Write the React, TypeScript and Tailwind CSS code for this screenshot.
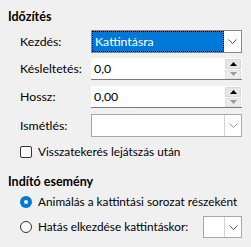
function Chevron({ color = '#5a5a5a' }: { color?: string }) {
  return (
    <svg width="9" height="5" viewBox="0 0 9 5" fill="none">
      <path d="M0.5 0.5 L4.5 4.5 L8.5 0.5" stroke={color} strokeWidth="1" />
    </svg>
  )
}

function Spin() {
  return (
    <div className="flex h-[20px] w-[16px] flex-col gap-px self-center">
      <div className="flex h-[10px] items-center justify-center border border-[#d9d9d9] bg-[#e6e6e6]">
        <svg width="7" height="4" viewBox="0 0 7 4">
          <path d="M0 4 L3.5 0 L7 4 Z" fill="#000" />
        </svg>
      </div>
      <div className="flex h-[9px] items-center justify-center border border-[#e0e0e0] bg-[#ececec]">
        <svg width="7" height="4" viewBox="0 0 7 4">
          <path d="M0 0 L3.5 4 L7 0 Z" fill="#9a9a9a" />
        </svg>
      </div>
    </div>
  )
}

function SpinField({ value }: { value: string }) {
  return (
    <div className="flex h-[22px] items-center border-b border-[#7a7a7a] bg-white pl-[3px] pr-px">
      <span className="flex-1">{value}</span>
      <Spin />
    </div>
  )
}

function Combo({ className = '', light = false }: { className?: string; light?: boolean }) {
  return (
    <div className={`flex border border-[#a8a8a8] bg-white ${className}`}>
      <div className="flex-1" />
      <div className="flex w-[17px] items-center justify-center border-l border-[#d4d4d4]">
        <Chevron color={light ? '#9a9a9a' : '#5a5a5a'} />
      </div>
    </div>
  )
}

export default function App() {
  return (
    <div className="h-[247px] w-[251px] whitespace-nowrap bg-[#f0f0f0] pl-2 pt-[9px] font-['Lato',sans-serif] text-[11.8px] leading-[16px] text-black">
      <div className="text-[12.5px] font-bold">Időzítés</div>

      <div className="mt-[5px] grid grid-cols-[71px_151px] pl-3 text-[12.3px]">
        <div className="flex h-[23px] items-center">Kezdés:</div>
        <div className="flex h-[23px] border border-[#8a8a8a] bg-white">
          <div className="flex flex-1 items-center border border-dotted border-black bg-[#0078d7] pl-[2px] text-white">
            Kattintásra
          </div>
          <div className="flex w-[17px] items-center justify-center">
            <Chevron />
          </div>
        </div>

        <div className="mt-[5px] flex h-[22px] items-center">Késleltetés:</div>
        <div className="mt-[5px]">
          <SpinField value="0,0" />
        </div>

        <div className="mt-[6px] flex h-[22px] items-center">Hossz:</div>
        <div className="mt-[6px]">
          <SpinField value="0,00" />
        </div>

        <div className="mt-[6px] flex h-[23px] items-center">Ismétlés:</div>
        <Combo className="mt-[6px] h-[23px]" light />
      </div>

      <label className="mt-[7px] flex h-[16px] items-center gap-[6px] pl-3">
        <span className="h-[12px] w-[12px] rounded-[2px] border border-[#333] bg-[#fafafa]" />
        Visszatekerés lejátszás után
      </label>

      <div className="mt-[14px] text-[12.5px] font-bold">Indító esemény</div>

      <div className="mt-[4px] flex h-[16px] items-center gap-[6px] pl-3">
        <span className="flex h-[12px] w-[12px] items-center justify-center rounded-full bg-[#0078d7]">
          <span className="h-[4px] w-[4px] rounded-full bg-white" />
        </span>
        Animálás a kattintási sorozat részeként
      </div>

      <div className="mt-[6px] flex h-[22px] items-center pl-3">
        <span className="h-[12px] w-[12px] rounded-full border border-[#333] bg-[#fafafa]" />
        <span className="ml-[6px] w-[165px]">Hatás elkezdése kattintáskor:</span>
        <Combo className="h-[22px] w-[39px]" />
      </div>
    </div>
  )
}
